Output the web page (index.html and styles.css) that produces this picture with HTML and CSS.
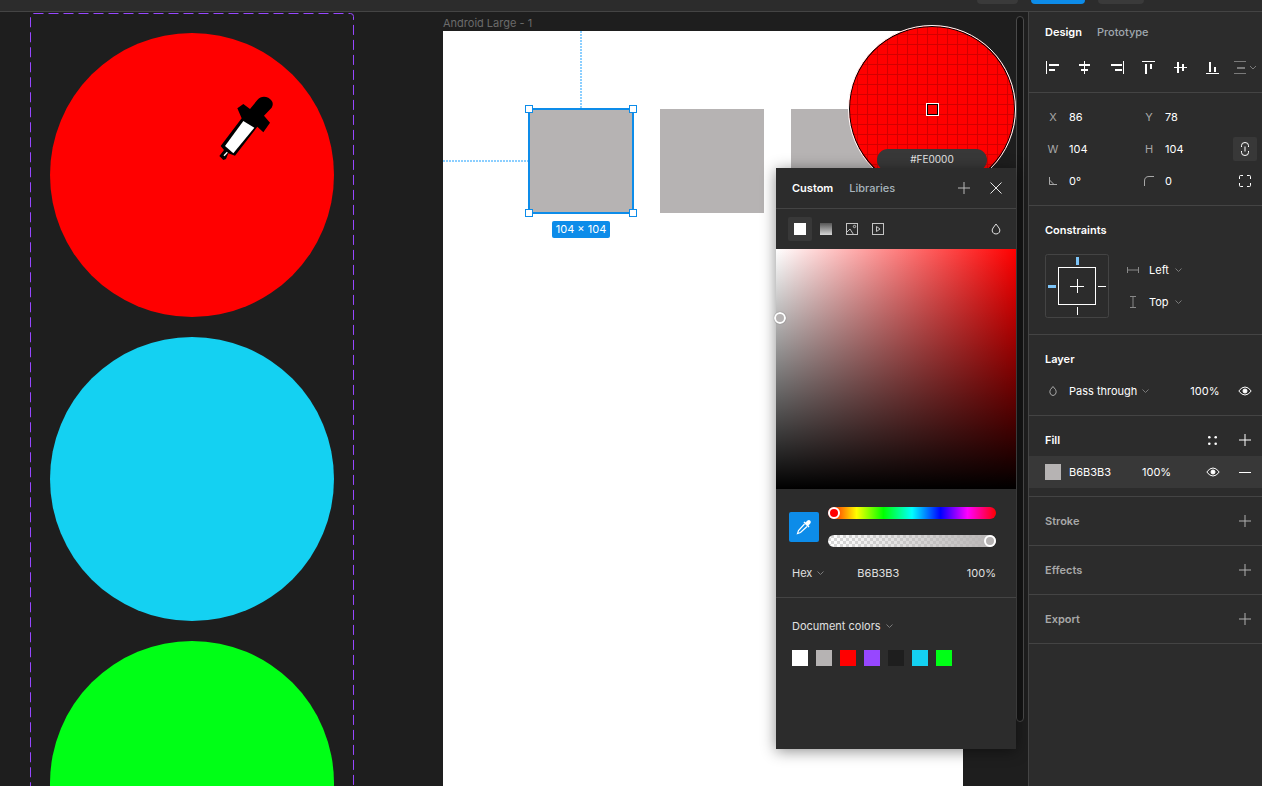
FILE: index.html
```html
<!DOCTYPE html>
<html lang="en">

<head>
   <meta charset="utf-8" />
   <title>Android Large - 1</title>
   <meta name="viewport" content="width=device-width, initial-scale=1">
   <link rel="stylesheet" href="styles.css">
</head>

<body>
   <div class="topbar">
      <span class="top-pill top-pill-a"></span>
      <span class="top-pill top-pill-b"></span>
      <span class="top-pill top-pill-c"></span>
   </div>

   <div class="main">
      <div class="canvas">
         <!-- left frame -->
         <svg class="frame-outline" width="326" height="900" viewBox="0 0 326 900">
            <rect x="0.5" y="0.5" width="323" height="1000" rx="3" fill="none" stroke="#9747ff" stroke-dasharray="10 5" />
         </svg>
         <div class="circle circle-red"></div>
         <div class="circle circle-cyan"></div>
         <div class="circle circle-green"></div>

         <svg class="dropper-cursor" width="90" height="85" viewBox="0 0 270 255">
            <path fill="#000" d="M112 70 130 57 150 72 172 45Q185 30 205 38 225 50 215 68L192 92 210 113 190 142 172 125 105 212 85 205 78 222 70 225 58 213 72 195 62 183 125 100Z" />
            <path fill="#fff" d="M130 108 163 128 100 205 75 183Z" />
            <path stroke="#fff" stroke-width="4" d="M72 212 82 202" />
         </svg>

         <!-- android frame -->
         <div class="frame-label">Android Large - 1</div>
         <div class="android-frame"></div>
         <div class="guide guide-v"></div>
         <div class="guide guide-h"></div>
         <div class="box box-1">
            <span class="handle handle-tl"></span>
            <span class="handle handle-tr"></span>
            <span class="handle handle-bl"></span>
            <span class="handle handle-br"></span>
         </div>
         <div class="box box-2"></div>
         <div class="box box-3"></div>
         <div class="size-badge">104 × 104</div>

         <!-- colour loupe -->
         <div class="loupe">
            <div class="loupe-center"></div>
            <div class="loupe-value">#FE0000</div>
         </div>

         <div class="scroll-thumb"></div>

         <!-- colour picker -->
         <div class="picker">
            <div class="picker-head">
               <span class="picker-tab picker-tab-on">Custom</span>
               <span class="picker-tab">Libraries</span>
               <svg class="picker-plus" width="12" height="12" viewBox="0 0 12 12">
                  <path stroke="#b8b8b8" d="M6 0V12M0 6H12" />
               </svg>
               <svg class="picker-close" width="12" height="12" viewBox="0 0 12 12">
                  <path stroke="#e6e6e6" d="M.5 .5 11.5 11.5M11.5 .5 .5 11.5" />
               </svg>
            </div>
            <div class="picker-types">
               <span class="type-btn type-btn-on"><span class="type-solid"></span></span>
               <span class="type-btn"><span class="type-gradient"></span></span>
               <span class="type-btn">
                  <svg width="12" height="12" viewBox="0 0 12 12" fill="none" stroke="#c4c4c4">
                     <rect x=".5" y=".5" width="11" height="11" />
                     <circle cx="8.5" cy="3.5" r="1.2" />
                     <path d="M.5 9.5 4 6 7.5 11.5" />
                  </svg>
               </span>
               <span class="type-btn">
                  <svg width="12" height="12" viewBox="0 0 12 12" fill="none" stroke="#c4c4c4">
                     <rect x=".5" y=".5" width="11" height="11" />
                     <path d="M4.5 3.5V8.500L8 6Z" />
                  </svg>
               </span>
               <svg class="type-drop" width="10" height="12" viewBox="0 0 10 12" fill="none" stroke="#e0e0e0">
                  <path d="M5 1 8 5Q9.500 7 8.500 9 7.500 11 5 11 2.500 11 1.500 9 .5 7 2 5Z" />
               </svg>
            </div>
            <div class="picker-field">
               <span class="field-handle"></span>
            </div>
            <div class="picker-sliders">
               <span class="eyedrop-btn">
                  <svg width="16" height="16" viewBox="0 0 16 16" fill="none">
                     <path fill="#fff" d="M9.500 3.500 11.500 1.500Q13 .5 14.300 1.700 15.500 3 14.300 4.500L12.500 6.500 13.500 7.500 12.500 8.500 7.500 3.500 8.500 2.500Z" />
                     <path stroke="#fff" stroke-width="1.200" d="M8.500 5 2.500 11.500 1.500 14.500 4.500 13.500 11 7.500" />
                  </svg>
               </span>
               <div class="slider-stack">
                  <div class="slider slider-hue"><span class="thumb thumb-hue"></span></div>
                  <div class="slider slider-alpha"><span class="thumb thumb-alpha"></span></div>
               </div>
            </div>
            <div class="hex-row">
               <span class="hex-mode">Hex</span>
               <svg class="chev" width="7" height="4" viewBox="0 0 7 4"><path d="M.5 .5 3.500 3.500 6.500 .5" /></svg>
               <span class="hex-value">B6B3B3</span>
               <span class="hex-alpha">100%</span>
            </div>
            <div class="doc-colors">
               <div class="doc-title">
                  <span>Document colors</span>
                  <svg class="chev" width="7" height="4" viewBox="0 0 7 4"><path d="M.5 .5 3.500 3.500 6.500 .5" /></svg>
               </div>
               <div class="swatches">
                  <span class="swatch sw-white"></span>
                  <span class="swatch sw-gray"></span>
                  <span class="swatch sw-red"></span>
                  <span class="swatch sw-purple"></span>
                  <span class="swatch sw-black"></span>
                  <span class="swatch sw-cyan"></span>
                  <span class="swatch sw-green"></span>
               </div>
            </div>
         </div>
      </div>

      <!-- right panel -->
      <div class="panel">
         <div class="section section-top">
            <div class="tabs">
               <span class="tab tab-on">Design</span>
               <span class="tab">Prototype</span>
            </div>
            <div class="align-row">
               <svg width="16" height="16" viewBox="0 0 16 16" stroke="#fff"><path d="M1.500 2V15" /><path stroke-width="2" d="M4 6H14M4 11H10" /></svg>
               <svg width="16" height="16" viewBox="0 0 16 16" stroke="#fff"><path d="M7.500 2V15" /><path stroke-width="2" d="M2 6H13M4 11H11" /></svg>
               <svg width="16" height="16" viewBox="0 0 16 16" stroke="#fff"><path d="M14.500 2V15" /><path stroke-width="2" d="M2 6H13M6 11H13" /></svg>
               <svg width="16" height="16" viewBox="0 0 16 16" stroke="#fff"><path d="M1 2.500H14" /><path stroke-width="2" d="M5 5V15M10 5V10" /></svg>
               <svg width="16" height="16" viewBox="0 0 16 16" stroke="#fff"><path d="M1 8.500H14" /><path stroke-width="2" d="M5 3V14M10 5V12" /></svg>
               <svg width="16" height="16" viewBox="0 0 16 16" stroke="#fff"><path d="M1 14.500H14" /><path stroke-width="2" d="M5 3V13M10 8V13" /></svg>
               <svg class="align-more" width="26" height="16" viewBox="0 0 26 16" fill="none" stroke="#7a7a7a"><path d="M1 2.500H13M1 14.500H13" /><path stroke-width="2" d="M4 9H12" /><path d="M17 7 20 10 23 7" /></svg>
            </div>
         </div>

         <div class="section section-size">
            <div class="size-row">
               <div class="field"><span class="field-label">X</span><span>86</span></div>
               <div class="field"><span class="field-label">Y</span><span>78</span></div>
            </div>
            <div class="size-row">
               <div class="field"><span class="field-label">W</span><span>104</span></div>
               <div class="field"><span class="field-label">H</span><span>104</span></div>
               <span class="link-btn">
                  <svg width="8" height="14" viewBox="0 0 8 14" fill="none" stroke="#fff">
                     <path d="M.5 5V3.500Q.5 .5 4 .5 7.500 .5 7.500 3.500V5M.5 9V10.500Q.5 13.500 4 13.500 7.500 13.500 7.500 10.500V9M4 4.500V9.500" />
                  </svg>
               </span>
            </div>
            <div class="size-row">
               <div class="field">
                  <span class="field-label">
                     <svg width="8" height="8" viewBox="0 0 8 8" fill="none" stroke="#a8a8a8"><path d="M.5 0V7.500H8M.5 3 5 7.500" /></svg>
                  </span>
                  <span>0°</span>
               </div>
               <div class="field">
                  <span class="field-label">
                     <svg width="10" height="10" viewBox="0 0 10 10" fill="none" stroke="#a8a8a8"><path d="M.5 10V5Q.5 .5 5 .5H10" /></svg>
                  </span>
                  <span>0</span>
               </div>
               <span class="link-btn link-btn-plain">
                  <svg width="12" height="12" viewBox="0 0 12 12" fill="none" stroke="#fff">
                     <path d="M.5 4V1.500Q.5 .5 1.500 .5H4M8 .5H10.500Q11.500 .5 11.500 1.500V4M11.500 8V10.500Q11.500 11.500 10.500 11.500H8M4 11.500H1.500Q.5 11.500 .5 10.500V8" />
                  </svg>
               </span>
            </div>
         </div>

         <div class="section section-constraints">
            <div class="section-head">Constraints</div>
            <div class="constraints">
               <svg class="constraint-box" width="64" height="64" viewBox="0 0 64 64" fill="none">
                  <rect x=".5" y=".5" width="63" height="63" rx="2" stroke="#444" />
                  <rect x="13.500" y="13.500" width="37" height="37" stroke="#fff" />
                  <path stroke="#fff" d="M25 32.500H39M32.500 25V39M53 32.500H61M32.500 53V61" />
                  <path stroke="#7cc4f8" stroke-width="3" d="M32.500 3V11M3 32.500H11" />
               </svg>
               <div class="constraint-opts">
                  <div class="constraint-opt">
                     <svg width="12" height="8" viewBox="0 0 12 8" fill="none" stroke="#888"><path d="M.5 1V7M11.500 1V7M1 4H11" /></svg>
                     <span>Left</span>
                     <svg class="chev" width="7" height="4" viewBox="0 0 7 4"><path d="M.5 .5 3.500 3.500 6.500 .5" /></svg>
                  </div>
                  <div class="constraint-opt">
                     <svg width="12" height="12" viewBox="0 0 12 12" fill="none" stroke="#888"><path d="M3 .5H9M3 11.500H9M6 1V11" /></svg>
                     <span>Top</span>
                     <svg class="chev" width="7" height="4" viewBox="0 0 7 4"><path d="M.5 .5 3.500 3.500 6.500 .5" /></svg>
                  </div>
               </div>
            </div>
         </div>

         <div class="section section-list">
            <div class="section-head">Layer</div>
            <div class="prop-row">
               <span class="prop-icon">
                  <svg width="8" height="10" viewBox="0 0 8 10" fill="none" stroke="#a8a8a8"><path d="M4 .5 6.500 3.500Q7.500 5 7 7 6 9.500 4 9.500 2 9.500 1 7 .5 5 1.500 3.500Z" /></svg>
               </span>
               <span class="blend-name">Pass through</span>
               <svg class="chev" width="7" height="4" viewBox="0 0 7 4"><path d="M.5 .5 3.500 3.500 6.500 .5" /></svg>
               <span class="blend-value">100%</span>
               <svg class="eye eye-layer" width="14" height="10" viewBox="0 0 14 10" fill="none" stroke="#fff">
                  <path d="M.8 5Q3.500 1 7 1 10.500 1 13.200 5 10.500 9 7 9 3.500 9 .8 5Z" />
                  <circle cx="7" cy="5" r="2" fill="#fff" />
               </svg>
            </div>
         </div>

         <div class="section section-list">
            <div class="section-head section-head-row">
               <span>Fill</span>
               <svg class="head-dots" width="9" height="9" viewBox="0 0 9 9" fill="#fff">
                  <circle cx="1.300" cy="1.300" r="1.300" />
                  <circle cx="7.700" cy="1.300" r="1.300" />
                  <circle cx="1.300" cy="7.700" r="1.300" />
                  <circle cx="7.700" cy="7.700" r="1.300" />
               </svg>
               <svg class="head-plus" width="12" height="12" viewBox="0 0 12 12"><path stroke="#fff" d="M6 0V12M0 6H12" /></svg>
            </div>
            <div class="prop-row fill-row">
               <span class="fill-swatch"></span>
               <span class="fill-hex">B6B3B3</span>
               <span class="fill-alpha">100%</span>
               <svg class="eye eye-fill" width="14" height="10" viewBox="0 0 14 10" fill="none" stroke="#fff">
                  <path d="M.8 5Q3.500 1 7 1 10.500 1 13.200 5 10.500 9 7 9 3.500 9 .8 5Z" />
                  <circle cx="7" cy="5" r="2" fill="#fff" />
               </svg>
               <svg class="fill-minus" width="12" height="1" viewBox="0 0 12 1"><path stroke="#fff" d="M0 .5H12" /></svg>
            </div>
         </div>

         <div class="section section-empty">
            <div class="section-head section-head-row section-head-dim">
               <span>Stroke</span>
               <svg class="head-plus" width="12" height="12" viewBox="0 0 12 12"><path stroke="#b0b0b0" d="M6 0V12M0 6H12" /></svg>
            </div>
         </div>
         <div class="section section-empty">
            <div class="section-head section-head-row section-head-dim">
               <span>Effects</span>
               <svg class="head-plus" width="12" height="12" viewBox="0 0 12 12"><path stroke="#b0b0b0" d="M6 0V12M0 6H12" /></svg>
            </div>
         </div>
         <div class="section section-empty">
            <div class="section-head section-head-row section-head-dim">
               <span>Export</span>
               <svg class="head-plus" width="12" height="12" viewBox="0 0 12 12"><path stroke="#b0b0b0" d="M6 0V12M0 6H12" /></svg>
            </div>
         </div>
      </div>
   </div>
</body>

</html>
```

FILE: styles.css
```css
* {
   box-sizing: border-box
}

html,
body {
   margin: 0;
   padding: 0;
   height: 100%;
   overflow: hidden;
}

body {
   display: flex;
   flex-direction: column;
   background: #1e1e1e;
   color: #fff;
   font-family: "Inter", "Liberation Sans", sans-serif;
   font-size: 11px;
   line-height: 16px;
}

svg {
   display: block;
   flex: none;
}

/* top bar */
.topbar {
   height: 12px;
   flex: none;
   display: flex;
   justify-content: flex-end;
   gap: 13px;
   padding-right: 118px;
   background: #2c2c2c;
   border-bottom: 1px solid #444;
}

.top-pill {
   height: 4px;
   background: #3a3a3a;
   border-radius: 0 0 6px 6px;
}

.top-pill-a {
   width: 41px
}

.top-pill-b {
   width: 54px;
   background: #0d8ce9;
}

.top-pill-c {
   width: 46px
}

.main {
   flex: 1;
   display: flex;
   min-height: 0;
}

/* canvas, a free surface: things sit at their own coordinates */
.canvas {
   position: relative;
   flex: 1;
   overflow: hidden;
   background: #1e1e1e;
}

.frame-outline {
   position: absolute;
   left: 30px;
   top: 1px;
}

.circle {
   position: absolute;
   left: 50px;
   width: 284px;
   height: 284px;
   border-radius: 50%;
}

.circle-red {
   top: 21px;
   background: #f00;
}

.circle-cyan {
   top: 325px;
   background: #14d1f2;
}

.circle-green {
   top: 629px;
   background: #00ff16;
}

.dropper-cursor {
   position: absolute;
   left: 200px;
   top: 73px;
}

.frame-label {
   position: absolute;
   left: 443px;
   top: 3px;
   color: #6b6b6b;
}

.android-frame {
   position: absolute;
   left: 443px;
   top: 19px;
   width: 520px;
   height: 800px;
   background: #fff;
}

.guide {
   position: absolute;
}

.guide-v {
   left: 580px;
   top: 19px;
   width: 2px;
   height: 78px;
   background: repeating-linear-gradient(#8ccfff 0 2px, transparent 2px 3px);
}

.guide-h {
   left: 443px;
   top: 148px;
   width: 86px;
   height: 2px;
   background: repeating-linear-gradient(90deg, #8ccfff 0 2px, transparent 2px 3px);
}

.box {
   position: absolute;
   top: 97px;
   width: 104px;
   height: 104px;
   background: #b6b3b3;
}

.box-1 {
   left: 529px;
   outline: 2px solid #0d8ce9;
   outline-offset: -1px;
}

.box-2 {
   left: 660px
}

.box-3 {
   left: 791px
}

.handle {
   position: absolute;
   width: 8px;
   height: 8px;
   background: #fff;
   border: 1px solid #0d8ce9;
}

.handle-tl {
   left: -4px;
   top: -4px;
}

.handle-tr {
   right: -4px;
   top: -4px;
}

.handle-bl {
   left: -4px;
   bottom: -4px;
}

.handle-br {
   right: -4px;
   bottom: -4px;
}

.size-badge {
   position: absolute;
   left: 552px;
   top: 209px;
   width: 58px;
   height: 17px;
   background: #0d8ce9;
   border-radius: 2px;
   text-align: center;
   line-height: 17px;
   white-space: nowrap;
}

.loupe {
   position: absolute;
   left: 848px;
   top: 13px;
   width: 168px;
   height: 168px;
   border-radius: 50%;
   border: 1px solid #fff;
   box-shadow: inset 0 0 0 1px #000;
   background-color: #f00;
   background-image: linear-gradient(#d40000 1px, transparent 1px), linear-gradient(90deg, #d40000 1px, transparent 1px);
   background-size: 10px 10px;
   background-position: 8px 8px;
}

.loupe-center {
   position: absolute;
   left: 77px;
   top: 77px;
   width: 13px;
   height: 13px;
   border: 1px solid #fff;
   box-shadow: inset 0 0 0 1px #000;
}

.loupe-value {
   position: absolute;
   left: 28px;
   top: 123px;
   width: 110px;
   height: 22px;
   border-radius: 11px;
   background: #383838;
   color: #e6e6e6;
   font-size: 10px;
   text-align: center;
   line-height: 20px;
}

.scroll-thumb {
   position: absolute;
   left: 1016px;
   top: 4px;
   width: 8px;
   height: 706px;
   border: 1px solid #4a4a4a;
   border-radius: 4px;
   background: #141414;
}

/* picker */
.picker {
   position: absolute;
   left: 776px;
   top: 156px;
   width: 240px;
   height: 581px;
   background: #2c2c2c;
   box-shadow: 0 2px 14px rgba(0, 0, 0, .45);
}

.picker-head {
   height: 41px;
   display: flex;
   align-items: center;
   gap: 16px;
   padding: 0 14px 0 16px;
   border-bottom: 1px solid #444;
}

.picker-tab {
   color: #a8b4bd;
   font-weight: 500;
}

.picker-tab-on {
   color: #fff;
   font-weight: 600;
}

.picker-plus {
   margin-left: auto
}

.picker-close {
   margin-left: 4px
}

.picker-types {
   height: 40px;
   display: flex;
   align-items: center;
   gap: 2px;
   padding: 0 15px 0 12px;
}

.type-btn {
   width: 24px;
   height: 24px;
   display: flex;
   align-items: center;
   justify-content: center;
   border-radius: 2px;
}

.type-btn-on {
   background: #383838
}

.type-solid {
   width: 12px;
   height: 12px;
   background: #fff;
}

.type-gradient {
   width: 12px;
   height: 12px;
   background: linear-gradient(#555, #d8d8d8);
}

.type-drop {
   margin-left: auto
}

.picker-field {
   position: relative;
   height: 240px;
   background: linear-gradient(to top, #000, transparent), linear-gradient(to right, #fff, #f00);
}

.field-handle {
   position: absolute;
   left: -2px;
   top: 63px;
   width: 12px;
   height: 12px;
   border-radius: 50%;
   background: #b6b3b3;
   border: 2px solid #fff;
   box-shadow: 0 0 1px rgba(0, 0, 0, .6);
}

.picker-sliders {
   display: flex;
   align-items: center;
   gap: 9px;
   padding: 18px 20px 0 13px;
}

.eyedrop-btn {
   width: 30px;
   height: 30px;
   display: flex;
   align-items: center;
   justify-content: center;
   background: #0d8ce9;
   border-radius: 2px;
}

.slider-stack {
   flex: 1;
   display: flex;
   flex-direction: column;
   gap: 16px;
}

.slider {
   position: relative;
   height: 12px;
   border-radius: 6px;
}

.slider-hue {
   background: linear-gradient(90deg, #f00, #ff0 17%, #0f0 33%, #0ff 50%, #00f 67%, #f0f 83%, #f00);
}

.slider-alpha {
   background:
      linear-gradient(90deg, rgba(182, 179, 179, 0), #b6b3b3),
      repeating-conic-gradient(#d8d8d8 0 25%, #fff 0 50%) 0 0 / 6px 6px;
}

.thumb {
   position: absolute;
   top: 0;
   width: 12px;
   height: 12px;
   border-radius: 50%;
   border: 2px solid #fff;
}

.thumb-hue {
   left: 0;
   background: #f00;
}

.thumb-alpha {
   right: 0;
   background: #b6b3b3;
}

.hex-row {
   height: 24px;
   display: flex;
   align-items: center;
   margin: 14px 0 12px;
   padding: 0 20px 0 16px;
   color: #e0e0e0;
}

.hex-mode {
   margin-right: 5px
}

.chev {
   fill: none;
   stroke: #7a7a7a;
}

.hex-value {
   margin-left: 33px
}

.hex-alpha {
   margin-left: auto
}

.doc-colors {
   border-top: 1px solid #444;
   padding: 20px 16px 0;
}

.doc-title {
   display: flex;
   align-items: center;
   gap: 5px;
   color: #e0e0e0;
}

.swatches {
   display: flex;
   gap: 8px;
   margin-top: 16px;
}

.swatch {
   width: 16px;
   height: 16px;
}

.sw-white {
   background: #fff
}

.sw-gray {
   background: #b6b3b3
}

.sw-red {
   background: #f00
}

.sw-purple {
   background: #9747ff
}

.sw-black {
   background: #1e1e1e
}

.sw-cyan {
   background: #14d1f2
}

.sw-green {
   background: #00ff16
}

/* right panel */
.panel {
   width: 234px;
   flex: none;
   background: #2c2c2c;
   border-left: 1px solid #444;
}

.section {
   border-bottom: 1px solid #444
}

.section-top {
   height: 81px
}

.tabs {
   height: 40px;
   display: flex;
   align-items: center;
   gap: 15px;
   padding-left: 16px;
}

.tab {
   color: #a0a8ae;
   font-weight: 500;
}

.tab-on {
   color: #fff;
   font-weight: 600;
}

.align-row {
   height: 32px;
   margin-top: -1px;
   display: flex;
   align-items: center;
   gap: 16px;
   padding-left: 16px;
}

.align-more {
   margin-left: -4px
}

.section-size {
   height: 113px;
   padding: 8px 0 8px 16px;
}

.size-row {
   height: 32px;
   display: flex;
   align-items: center;
}

.field {
   width: 96px;
   display: flex;
   align-items: center;
}

.field-label {
   width: 16px;
   margin-right: 8px;
   display: flex;
   justify-content: center;
   color: #a8a8a8;
}

.link-btn {
   width: 24px;
   height: 24px;
   margin-left: -4px;
   display: flex;
   align-items: center;
   justify-content: center;
   background: #383838;
   border-radius: 2px;
}

.link-btn-plain {
   background: none
}

.section-head {
   height: 48px;
   display: flex;
   align-items: center;
   padding-left: 16px;
   font-weight: 600;
}

.section-head-row {
   padding-right: 11px
}

.section-head-dim {
   color: #a8a8a8
}

.head-dots {
   margin-left: auto;
   margin-right: 22px;
}

.head-plus {
   margin-left: auto
}

.head-dots+.head-plus {
   margin-left: 0
}

.section-constraints {
   height: 129px
}

.constraints {
   display: flex;
   padding-left: 16px;
}

.constraint-opts {
   display: flex;
   flex-direction: column;
   padding: 0 0 0 18px;
}

.constraint-opt {
   height: 32px;
   display: flex;
   align-items: center;
}

.constraint-opt span {
   margin: 0 6px 0 10px
}

.section-list {
   padding-bottom: 8px
}

.prop-row {
   height: 32px;
   margin-top: -8px;
   display: flex;
   align-items: center;
   padding-left: 16px;
}

.prop-icon {
   width: 16px;
   margin-right: 8px;
   display: flex;
   justify-content: center;
}

.blend-name {
   margin-right: 5px
}

.blend-value {
   margin-left: 41px
}

.eye-layer {
   margin-left: 19px
}

.fill-row {
   background: #383838
}

.fill-swatch {
   width: 16px;
   height: 16px;
   background: #b6b3b3;
}

.fill-hex {
   margin-left: 8px
}

.fill-alpha {
   margin-left: 31px
}

.eye-fill {
   margin-left: 35px
}

.fill-minus {
   margin-left: 19px
}
```
